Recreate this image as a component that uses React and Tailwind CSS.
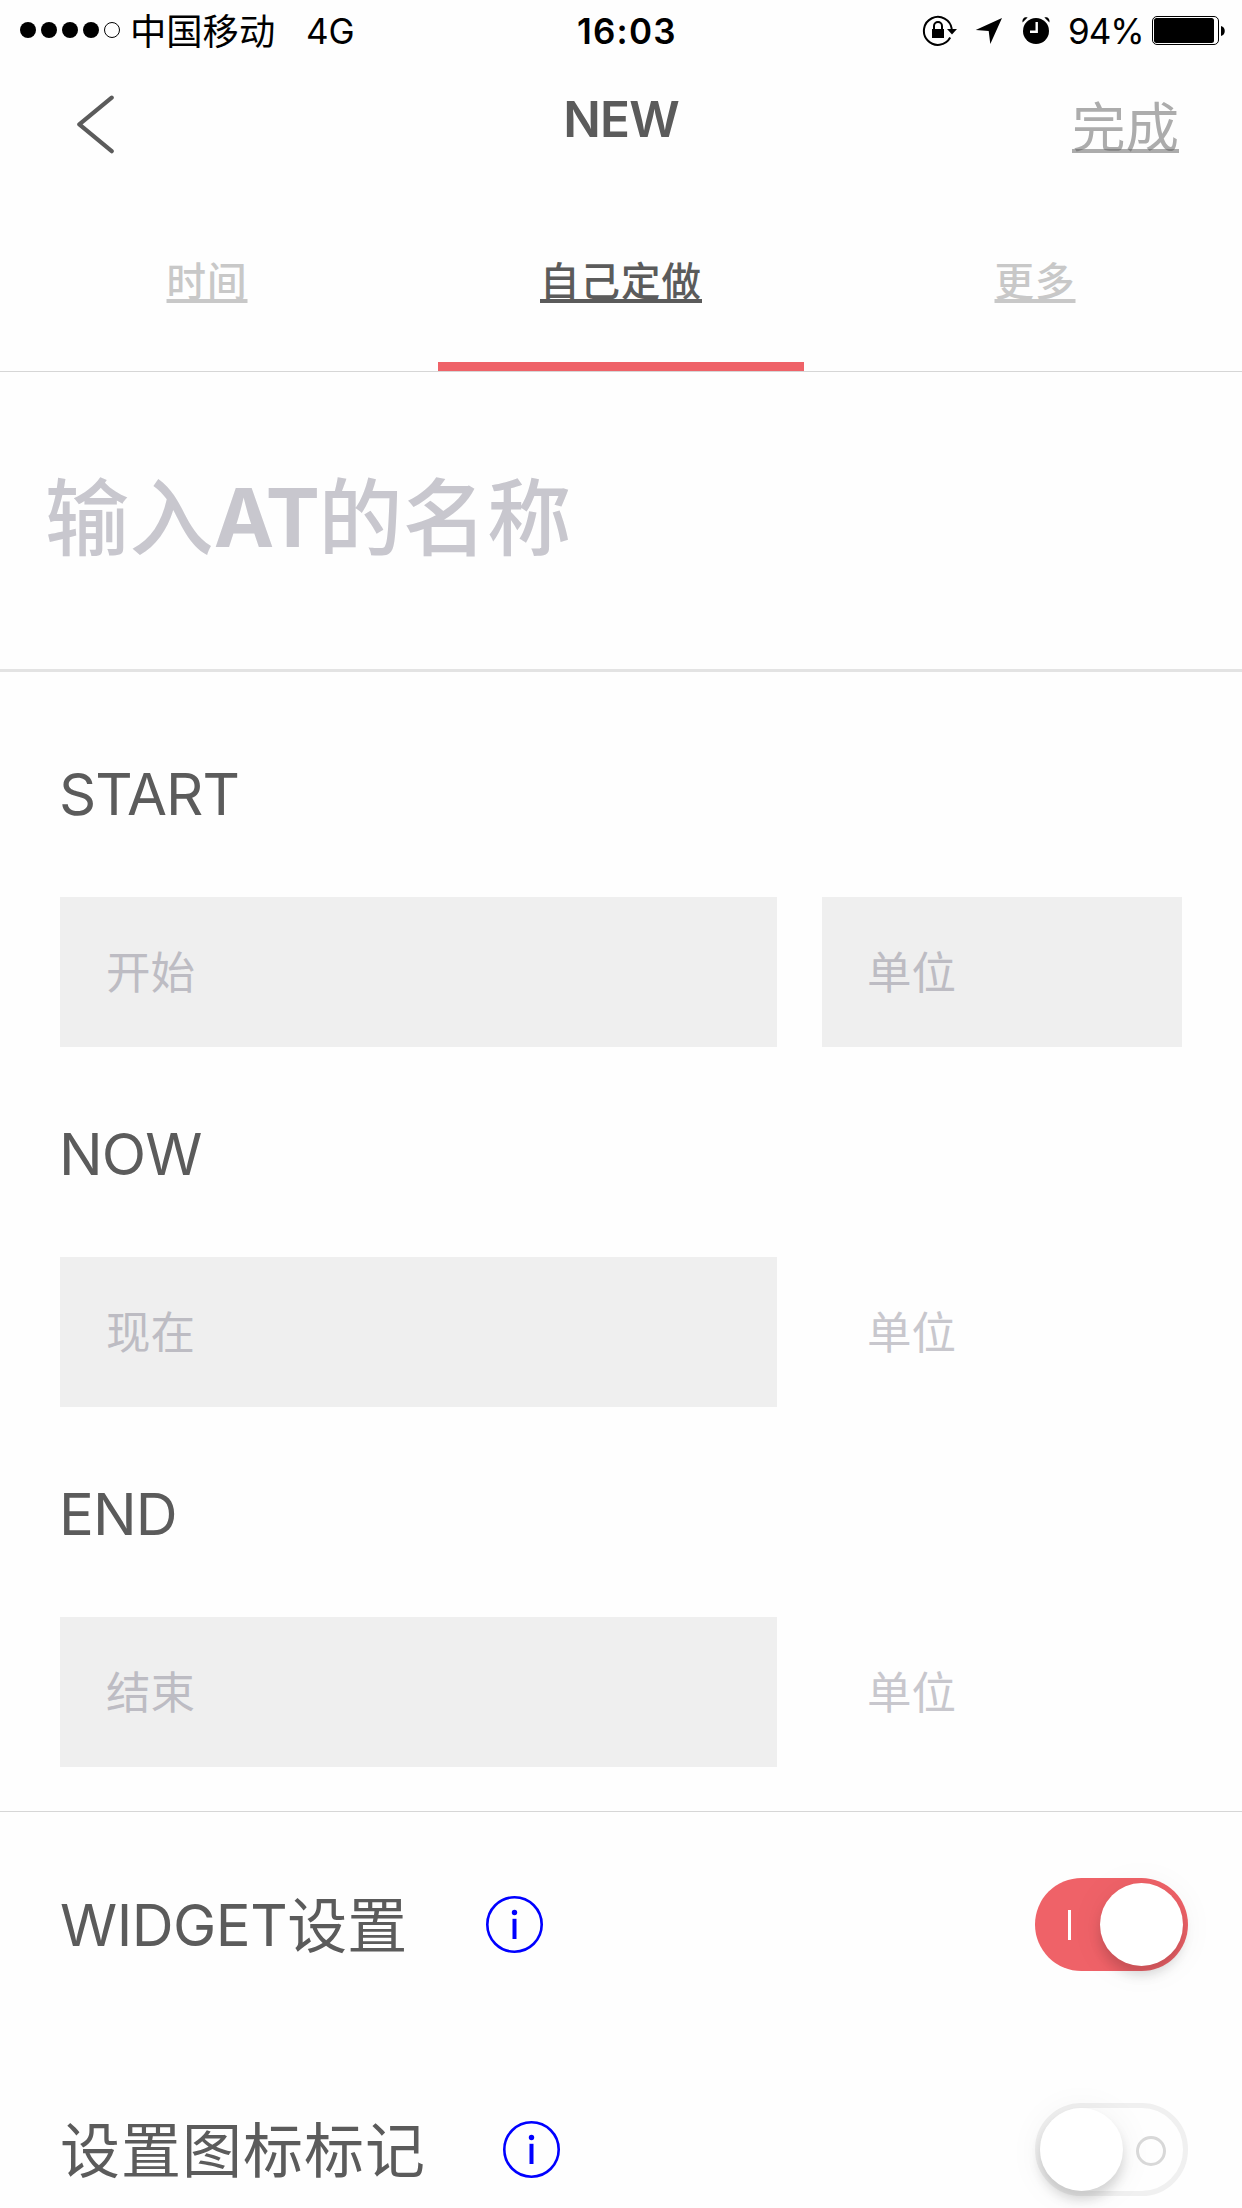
function StatusBar() {
  return (
    <div className="flex h-[63px] text-[35px] leading-[62px] text-black">
      <svg className="ml-[18px] mt-[20px] h-5 w-[106px]" viewBox="18 20 106 20">
        <circle cx="28" cy="30" r="8" />
        <circle cx="49" cy="30" r="8" />
        <circle cx="70" cy="30" r="8" />
        <circle cx="91" cy="30" r="8" />
        <circle cx="112" cy="30" r="7.5" fill="none" stroke="#000" strokeWidth="1" />
      </svg>
      <span className="ml-[6px] w-[176px] whitespace-nowrap text-[36.3px] leading-[64px]">中国移动</span>
      <span className="w-[271px]">4G</span>
      <span className="w-[339px] font-semibold tracking-[1.2px]">16:03</span>
      <svg className="ml-1 mt-[14px] h-8 w-[132px]" viewBox="920 14 132 32">
        <path d="M950.2 37.6 A14 14 0 1 1 951.8 29" fill="none" stroke="#000" strokeWidth="2" />
        <path d="M947 29 H957 L952 34.5 Z" />
        <rect x="932" y="29" width="12" height="9" />
        <path d="M934 30 V26 a4 4 0 0 1 8 0 V30" fill="none" stroke="#000" strokeWidth="2" />
        <path d="M975.7 30 L1002 18 L990.3 44 L988.7 31 Z" />
        <circle cx="1036" cy="31" r="13" />
        <path d="M1022.6 22.5 C1022 19 1024 16.8 1027.6 17.4 Z M1049.4 22.5 C1050 19 1048 16.8 1044.4 17.4 Z" />
        <path d="M1036.7 22 V31.7 H1030" fill="none" stroke="#fff" strokeWidth="2.4" />
      </svg>
      <span className="ml-[16px] w-[83px] tracking-[-1px]">94%</span>
      <svg className="mt-[15px] h-8 w-[75px]" viewBox="1151 15 75 32">
        <rect x="1152.5" y="16.5" width="66" height="28" rx="4.5" fill="none" stroke="#000" strokeWidth="1" />
        <rect x="1154" y="18" width="60" height="25" rx="2.5" />
        <path d="M1221 26 c5 1 5 9 0 10 Z" />
      </svg>
    </div>
  );
}

function NavBar() {
  return (
    <div className="grid h-[113px] grid-cols-3 text-[#5b5b5b]">
      <svg className="ml-[72px] mt-[31px] h-[60px] w-[44px]" viewBox="72 94 44 60" fill="none" stroke="#5b5b5b" strokeWidth="4.2" strokeLinecap="round" strokeLinejoin="round">
        <path d="M111.7 97.7 L79.3 124.4 L111.7 151.2" />
      </svg>
      <h1 className="text-center text-[49.5px] font-semibold leading-[113px] tracking-[-0.8px]">NEW</h1>
      <button className="h-[129px] pr-[63px] text-right text-[53.5px] leading-[129px] text-[#5a5a5a80] underline decoration-[4px] underline-offset-[2px] [text-decoration-skip-ink:none]">
        完成
      </button>
    </div>
  );
}

function Tab({ label, active }) {
  return (
    <div className="flex flex-col items-center justify-between pt-[76px]">
      <span
        className={
          "text-[39.5px] font-medium leading-[60px] tracking-[1px] underline decoration-[4px] underline-offset-[3px] [text-decoration-skip-ink:none] " +
          (active ? "text-[#5b5b5b]" : "text-[#c8c8c8]")
        }
      >
        {label}
      </span>
      {active && <div className="h-[9px] w-[366px] bg-[#ef6268]" />}
    </div>
  );
}

function Field({ label, value, unitFilled }) {
  return (
    <div>
      <h2 className="-ml-px h-[210px] pt-[62px] text-[58px] leading-[90px] tracking-[-0.9px] text-[#5b5b5b]">{label}</h2>
      <div className="flex h-[150px] gap-[45px] text-[44.5px] leading-[152px]">
        <div className="w-[717px] bg-[#efefef] pl-[46px] text-[#bdbcc3]">{value}</div>
        <div className={"w-[360px] pl-[45px] " + (unitFilled ? "bg-[#efefef] text-[#bdbcc3]" : "text-[#c8c7cd]")}>单位</div>
      </div>
    </div>
  );
}

function InfoIcon() {
  return (
    <svg className="h-[57px] w-[57px]" viewBox="0 0 57 57">
      <circle cx="28.5" cy="28.5" r="27.2" fill="none" stroke="#00f" strokeWidth="2.6" />
      <circle cx="28.5" cy="16.5" r="2.7" fill="#00f" />
      <rect x="26.5" y="22.8" width="4" height="20.2" fill="#00f" />
    </svg>
  );
}

function Toggle({ on }) {
  const knob =
    "h-[83px] w-[83px] rounded-full bg-white shadow-[0_3px_36px_rgba(0,0,0,0.06),0_9px_12px_rgba(0,0,0,0.14)]";
  return on ? (
    <div className="flex h-[93px] w-[153px] items-center justify-between rounded-full bg-[#ef6268] pl-[33px] pr-[5px]">
      <div className="h-[30px] w-[3px] bg-white" />
      <div className={knob} />
    </div>
  ) : (
    <div className="flex h-[93px] w-[153px] items-center justify-between rounded-full border-[5px] border-[#f0f0f0] pr-[17px]">
      <div className={knob} />
      <div className="mt-[3px] h-[30px] w-[30px] rounded-full border-[3px] border-[#d8d8d8]" />
    </div>
  );
}

function SettingRow({ children, gap, on }) {
  return (
    <div className="flex h-[225px] items-center pl-[60px] pr-[54px]">
      <span className={"whitespace-nowrap pt-[3px] text-[60px] leading-[90px] text-[#5b5b5b] " + gap}>{children}</span>
      <InfoIcon />
      <div className="ml-auto">
        <Toggle on={on} />
      </div>
    </div>
  );
}

export default function App() {
  return (
    <div className="h-[2208px] w-[1242px] overflow-hidden bg-[#fefefe] font-['Inter','Noto_Sans_CJK_SC',sans-serif]">
      <StatusBar />
      <NavBar />
      <div className="grid h-[196px] grid-cols-3 border-b border-[#d6d6d6]">
        <Tab label="时间" />
        <Tab label="自己定做" active />
        <Tab label="更多" />
      </div>
      <div className="h-[300px] border-b-[3px] border-[#e3e3e3] pl-[45px] pt-[87px] text-[84px] font-medium leading-[120px] tracking-[0.4px] text-[#c8c7ce]">
        输入<span className="align-[2px] text-[81px] font-bold leading-none tracking-[-1.3px]">AT</span>的名称
      </div>
      <div className="h-[1140px] border-b border-[#d6d6d6] pl-[60px] pt-[15px]">
        <Field label="START" value="开始" unitFilled />
        <Field label="NOW" value="现在" />
        <Field label="END" value="结束" />
      </div>
      <SettingRow gap="w-[426px]" on>
        <span className="align-[2px] text-[58px] leading-none tracking-[-0.5px]">WIDGET</span>设置
      </SettingRow>
      <SettingRow gap="w-[443px] tracking-[1px]">设置图标标记</SettingRow>
    </div>
  );
}
